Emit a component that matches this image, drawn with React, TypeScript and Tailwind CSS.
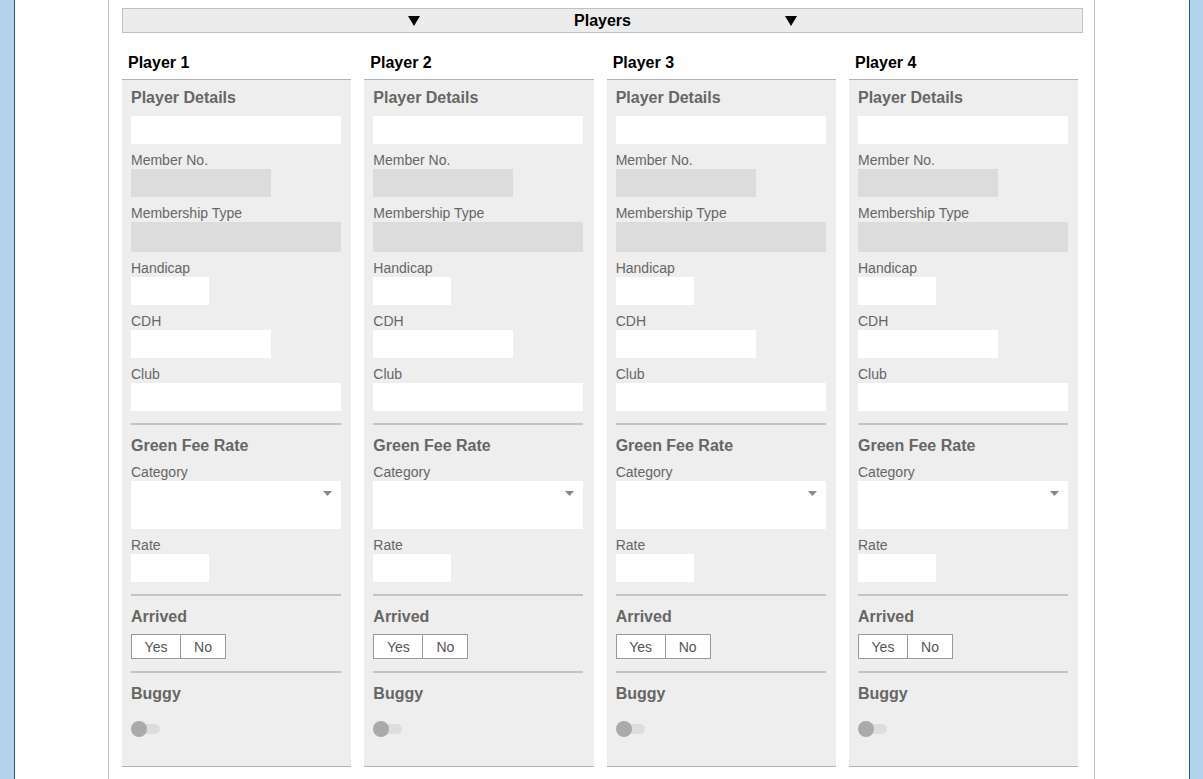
import React from 'react';

const players = ['Player 1', 'Player 2', 'Player 3', 'Player 4'];

function Label({ children }: { children: React.ReactNode }) {
  return <div className="mt-2 h-4 text-[14px] leading-4 text-[#666]">{children}</div>;
}

function Field({ w, h = 'h-[28px]', gray = false }: { w: string; h?: string; gray?: boolean }) {
  return <div className={`mt-px ${h} ${w} ${gray ? 'bg-[#dcdcdc]' : 'bg-white'}`} />;
}

function Section({ children }: { children: React.ReactNode }) {
  return <div className="h-5 text-[16px] font-bold leading-[22px] text-[#666]">{children}</div>;
}

function Divider() {
  return <div className="mt-3 mb-[10px] h-[2px] w-[210px] bg-[#c4c4c4]" />;
}

function Triangle({ className }: { className: string }) {
  return (
    <svg viewBox="0 0 12 10" preserveAspectRatio="none" className={className} aria-hidden="true">
      <polygon points="0,0 12,0 6,10" fill="currentColor" />
    </svg>
  );
}

function PlayerColumn({ name }: { name: string }) {
  return (
    <div className="w-[229.33px] shrink-0">
      <div className="flex h-[46px] items-end pb-[6px] pl-[6px] text-[16px] font-bold leading-5 text-black">
        {name}
      </div>
      <div className="h-[688px] border-t border-b border-[#b3b3b3] bg-[#eeeeee] pl-[9px] pt-[7px]">
        <Section>Player Details</Section>
        <div className="mt-[9px] h-[28px] w-[210px] bg-white" />
        <Label>Member No.</Label>
        <Field w="w-[140px]" gray />
        <Label>Membership Type</Label>
        <Field w="w-[210px]" h="h-[30px]" gray />
        <Label>Handicap</Label>
        <Field w="w-[78px]" />
        <Label>CDH</Label>
        <Field w="w-[140px]" />
        <Label>Club</Label>
        <Field w="w-[210px]" />
        <Divider />

        <Section>Green Fee Rate</Section>
        <div className="mt-[9px] h-4 text-[14px] leading-4 text-[#666]">Category</div>
        <div className="relative mt-px h-[48px] w-[210px] bg-white">
          <Triangle className="absolute right-[9px] top-[10px] h-[5px] w-[9px] text-[#888]" />
        </div>
        <Label>Rate</Label>
        <Field w="w-[78px]" />
        <Divider />

        <Section>Arrived</Section>
        <div className="mt-2 flex h-[25px] w-[95px] border border-[#999] bg-white text-[14px] leading-[25px] text-[#555]">
          <div className="w-[49px] border-r border-[#999] text-center">Yes</div>
          <div className="flex-1 text-center">No</div>
        </div>
        <Divider />

        <Section>Buggy</Section>
        <div className="relative mt-[18px] h-4 w-[30px]">
          <div className="absolute left-[4px] top-[3px] h-[10px] w-[25px] rounded-full bg-[#dddddd]" />
          <div className="absolute left-0 top-0 h-4 w-4 rounded-full bg-[#aaaaaa]" />
        </div>
      </div>
    </div>
  );
}

export default function App() {
  return (
    <div className="flex h-[779px] overflow-hidden bg-white font-['Liberation_Sans',Arial,sans-serif]">
      <div className="w-[14px] shrink-0 bg-[#b3d3ea]" />
      <div className="w-px shrink-0 bg-[#1d5b9b]" />
      <div className="w-[93px] shrink-0 bg-white" />
      <div className="w-px shrink-0 bg-[#c0c0c0]" />
      <div className="w-[985px] shrink-0 pl-[13px] pt-2">
        <div className="flex h-[25px] w-[961px] items-center justify-center gap-[154px] border border-[#c0c0c0] bg-[#ececec] text-[16px] font-bold text-black">
          <Triangle className="h-[10px] w-[12px]" />
          <span className="leading-5">Players</span>
          <Triangle className="h-[10px] w-[12px]" />
        </div>
        <div className="flex gap-[13px]">
          {players.map(p => (
            <PlayerColumn key={p} name={p} />
          ))}
        </div>
      </div>
      <div className="w-px shrink-0 bg-[#c0c0c0]" />
      <div className="w-[94px] shrink-0 bg-white" />
      <div className="w-px shrink-0 bg-[#1d5b9b]" />
      <div className="flex-1 bg-[#b3d3ea]" />
    </div>
  );
}
